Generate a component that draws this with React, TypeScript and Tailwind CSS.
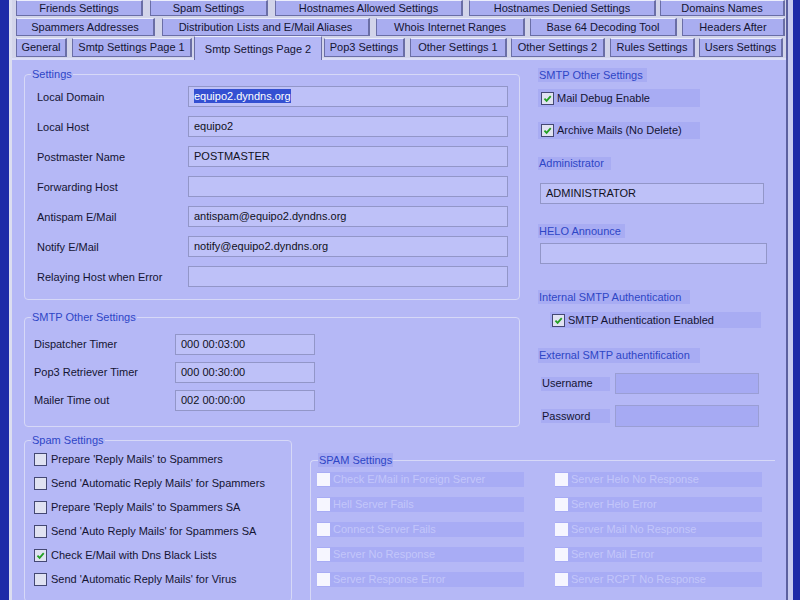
import React from 'react';

type TabDef = { label: string; cls: string; active?: boolean };

const ROW1: TabDef[] = [
  { label: 'Friends Settings', cls: 'ml-[4px] w-[127px]' },
  { label: 'Spam Settings', cls: 'ml-[7px] w-[118px]' },
  { label: 'Hostnames Allowed Settings', cls: 'ml-[7px] w-[188px]' },
  { label: 'Hostnames Denied Settings', cls: 'ml-[6px] w-[187px]' },
  { label: 'Domains Names', cls: 'ml-[4px] w-[125px]' },
];

const ROW2: TabDef[] = [
  { label: 'Spammers Addresses', cls: 'ml-[4px] w-[139px]' },
  { label: 'Distribution Lists and E/Mail Aliases', cls: 'ml-[7px] w-[208px]' },
  { label: 'Whois Internet Ranges', cls: 'ml-[6px] w-[149px]' },
  { label: 'Base 64 Decoding Tool', cls: 'ml-[5px] w-[147px]' },
  { label: 'Headers After', cls: 'ml-[5px] w-[103px]' },
];

const ROW3: TabDef[] = [
  { label: 'General', cls: 'ml-[4px] w-[51px]' },
  { label: 'Smtp Settings Page 1', cls: 'ml-[5px] w-[120px]' },
  { label: 'Smtp Settings Page 2', cls: 'ml-[2px] w-[128px]', active: true },
  { label: 'Pop3 Settings', cls: 'ml-[2px] w-[81px]' },
  { label: 'Other Settings 1', cls: 'ml-[5px] w-[97px]' },
  { label: 'Other Settings 2', cls: 'ml-[4px] w-[94px]' },
  { label: 'Rules Settings', cls: 'ml-[5px] w-[85px]' },
  { label: 'Users Settings', cls: 'ml-[4px] w-[84px]' },
];

const SETTINGS = [
  { label: 'Local Domain', value: 'equipo2.dyndns.org', selected: true },
  { label: 'Local Host', value: 'equipo2' },
  { label: 'Postmaster Name', value: 'POSTMASTER' },
  { label: 'Forwarding Host', value: '' },
  { label: 'Antispam E/Mail', value: 'antispam@equipo2.dyndns.org' },
  { label: 'Notify E/Mail', value: 'notify@equipo2.dyndns.org' },
  { label: 'Relaying Host when Error', value: '' },
];

const TIMERS = [
  { label: 'Dispatcher Timer', value: '000 00:03:00' },
  { label: 'Pop3 Retriever Timer', value: '000 00:30:00' },
  { label: 'Mailer Time out', value: '002 00:00:00' },
];

const SPAM = [
  { label: "Prepare 'Reply Mails' to Spammers", checked: false },
  { label: "Send 'Automatic Reply Mails' for Spammers", checked: false },
  { label: "Prepare 'Reply Mails' to Spammers SA", checked: false },
  { label: "Send 'Auto Reply Mails' for Spammers SA", checked: false },
  { label: 'Check E/Mail with Dns Black Lists', checked: true },
  { label: "Send 'Automatic Reply Mails' for Virus", checked: false },
];

const DISABLED_LEFT = [
  'Check E/Mail in Foreign Server',
  'Hell Server Fails',
  'Connect Server Fails',
  'Server No Response',
  'Server Response Error',
];

const DISABLED_RIGHT = [
  'Server Helo No Response',
  'Server Helo Error',
  'Server Mail No Response',
  'Server Mail Error',
  'Server RCPT No Response',
];

function Tab({ t, h }: { t: TabDef; h: string }) {
  if (t.active) {
    return (
      <div className={`${t.cls} relative z-10 -mb-[2px] flex h-[24px] items-center justify-center border border-b-0 border-[#6a6ea6] border-t-[#eceefc] bg-[#b5b8f6] pt-[2px] text-[11px] text-[#141433]`}>
        {t.label}
      </div>
    );
  }
  return (
    <div className={`${t.cls} ${h} flex items-center justify-center border border-[#6a6ea6] border-r-2 border-t-[#eceefc] bg-[#a9adf0] text-[11px] text-[#141433]`}>
      {t.label}
    </div>
  );
}

function Check({ checked, disabled }: { checked?: boolean; disabled?: boolean }) {
  if (disabled) {
    return <span className="h-[13px] w-[13px] shrink-0 bg-[#f6f6ff]" />;
  }
  return (
    <span className="flex h-[13px] w-[13px] shrink-0 items-center justify-center border border-[#444873] bg-[#e0e2f2]">
      {checked && (
        <svg viewBox="0 0 10 10" className="h-[9px] w-[9px]">
          <path d="M1.6 5.2 L4 7.6 L8.6 2.4" stroke="#23a023" strokeWidth="2" fill="none" />
        </svg>
      )}
    </span>
  );
}

function Input({ value, cls, selected }: { value: string; cls: string; selected?: boolean }) {
  return (
    <div className={`${cls} flex items-center border border-[#9296c8] bg-[#bec1f8] px-[5px] text-[11px] text-[#111122]`}>
      {selected ? <span className="bg-[#3450d2] leading-[14px] text-white">{value}</span> : value}
    </div>
  );
}

function Group({ title, cls, children }: { title: string; cls: string; children: React.ReactNode }) {
  return (
    <fieldset className={`${cls} rounded-[4px] border border-[#d6d8f7]`}>
      <legend className="ml-[6px] px-[1px] text-[11px] leading-[14px] text-[#2e46c6]">{title}</legend>
      {children}
    </fieldset>
  );
}

function Hl({ cls, children }: { cls: string; children: React.ReactNode }) {
  return <div className={`${cls} flex items-center bg-[#a8acf3] pl-[1px] text-[11px] text-[#2e46c6]`}>{children}</div>;
}

export default function App() {
  return (
    <div className="flex h-[600px] w-[800px] overflow-hidden bg-[#1e2aa8] font-['Liberation_Sans',Arial,sans-serif]">
      <div className="w-[9px] shrink-0 bg-[#1e2aa8]" />
      <div className="w-[3px] shrink-0 bg-[#dcdef0]" />

      <div className="flex w-[774px] shrink-0 flex-col bg-[#d2d4ea]">
        {/* tab rows */}
        <div className="flex h-[16px]">
          {ROW1.map(t => <Tab key={t.label} t={t} h="h-[16px]" />)}
        </div>
        <div className="mt-[2px] flex h-[18px]">
          {ROW2.map(t => <Tab key={t.label} t={t} h="h-[18px]" />)}
        </div>
        <div className="flex h-[22px] items-end">
          {ROW3.map(t => <Tab key={t.label} t={t} h="mb-[1px] h-[19px]" />)}
        </div>

        {/* page */}
        <div className="flex flex-1 flex-col border-t-2 border-[#dcdef8] bg-[#b5b8f6] pt-[7px] text-[11px] text-[#141433]">
          <div className="flex">
            <div className="ml-[12px] flex w-[496px] flex-col">
              <Group title="Settings" cls="w-[496px] pb-[8px]">
                {SETTINGS.map(s => (
                  <div key={s.label} className="flex h-[30px] items-center">
                    <div className="w-[163px] pl-[12px] pt-[3px]">{s.label}</div>
                    <Input value={s.value} selected={s.selected} cls="h-[21px] w-[320px]" />
                  </div>
                ))}
              </Group>

              <Group title="SMTP Other Settings" cls="mt-[10px] w-[496px] pt-[6px] pb-[12px]">
                {TIMERS.map(s => (
                  <div key={s.label} className="flex h-[28px] items-center">
                    <div className="w-[150px] pl-[9px]">{s.label}</div>
                    <Input value={s.value} cls="h-[21px] w-[140px]" />
                  </div>
                ))}
              </Group>
            </div>

            <div className="ml-[18px] flex w-[237px] flex-col">
              <Hl cls="mt-[1px] h-[14px] w-[109px]">SMTP Other Settings</Hl>
              <div className="mt-[7px] flex h-[18px] w-[162px] items-center gap-[3px] bg-[#a8acf3] pl-[3px]">
                <Check checked />
                <span>Mail Debug Enable</span>
              </div>
              <div className="mt-[15px] flex h-[17px] w-[162px] items-center gap-[3px] bg-[#a8acf3] pl-[3px]">
                <Check checked />
                <span>Archive Mails (No Delete)</span>
              </div>
              <Hl cls="mt-[18px] h-[13px] w-[73px]">Administrator</Hl>
              <Input value="ADMINISTRATOR" cls="ml-[2px] mt-[13px] h-[21px] w-[224px]" />
              <Hl cls="mt-[20px] h-[14px] w-[87px]">HELO Announce</Hl>
              <Input value="" cls="ml-[2px] mt-[5px] h-[21px] w-[227px]" />
              <Hl cls="mt-[26px] h-[14px] w-[152px]">Internal SMTP Authentication</Hl>
              <div className="ml-[12px] mt-[8px] flex h-[16px] w-[211px] items-center gap-[3px] bg-[#a8acf3] pl-[2px]">
                <Check checked />
                <span>SMTP Authentication Enabled</span>
              </div>
              <Hl cls="mt-[20px] h-[15px] w-[162px]">External SMTP authentification</Hl>
              <div className="mt-[10px] flex items-center">
                <div className="ml-[3px] flex h-[14px] w-[69px] items-center bg-[#a8acf3] pl-[1px]">Username</div>
                <div className="ml-[5px] h-[21px] w-[144px] border border-[#9a9ed4] bg-[#a6aaf3]" />
              </div>
              <div className="mt-[11px] flex items-center">
                <div className="ml-[3px] flex h-[14px] w-[69px] items-center bg-[#a8acf3] pl-[1px]">Password</div>
                <div className="ml-[5px] h-[22px] w-[144px] border border-[#9a9ed4] bg-[#a6aaf3]" />
              </div>
            </div>
          </div>

          <div className="mt-[6px] flex items-start">
            <Group title="Spam Settings" cls="ml-[12px] w-[268px] pb-[10px]">
              {SPAM.map(s => (
                <div key={s.label} className="flex h-[24px] items-center gap-[4px] pl-[9px]">
                  <Check checked={s.checked} />
                  <span>{s.label}</span>
                </div>
              ))}
            </Group>

            <fieldset className="ml-[18px] mt-[20px] w-[465px] rounded-tl-[4px] border border-r-0 border-[#d6d8f7] pb-[10px]">
              <legend className="ml-[7px] bg-[#a8acf3] px-[1px] text-[11px] leading-[14px] text-[#2e46c6]">SPAM Settings</legend>
              <div className="flex pl-[6px]">
                <div className="flex w-[207px] flex-col">
                  {DISABLED_LEFT.map(l => (
                    <div key={l} className="flex h-[25px] items-center">
                      <div className="flex h-[15px] w-[207px] items-center gap-[3px] bg-[#a8acf5] text-[#c3c6fa]">
                        <Check disabled />
                        <span>{l}</span>
                      </div>
                    </div>
                  ))}
                </div>
                <div className="ml-[31px] flex w-[207px] flex-col">
                  {DISABLED_RIGHT.map(l => (
                    <div key={l} className="flex h-[25px] items-center">
                      <div className="flex h-[15px] w-[207px] items-center gap-[3px] bg-[#a8acf5] text-[#c3c6fa]">
                        <Check disabled />
                        <span>{l}</span>
                      </div>
                    </div>
                  ))}
                </div>
              </div>
            </fieldset>
          </div>
        </div>
      </div>

      <div className="w-[2px] shrink-0 bg-[#5c60a0]" />
      <div className="w-[5px] shrink-0 bg-[#c8caf0]" />
    </div>
  );
}
